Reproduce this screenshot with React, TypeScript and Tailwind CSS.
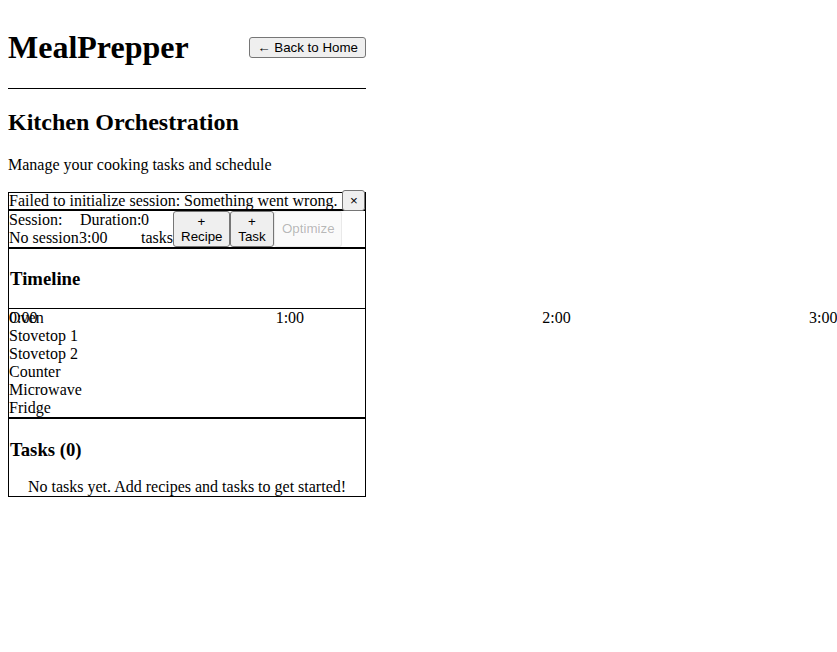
const btn =
  "rounded-[3px] border border-[#767676] bg-[#efefef] px-[7px] py-[2px] font-['Liberation_Sans',Arial,sans-serif] text-[13.33px] leading-[15px] text-black"

const resources = ['Oven', 'Stovetop 1', 'Stovetop 2', 'Counter', 'Microwave', 'Fridge']

export default function App() {
  return (
    <div className="min-h-screen w-full overflow-hidden bg-white p-2 font-['Liberation_Serif','Times_New_Roman',serif] text-base text-black">
      <div className="w-[358px]">
        <header className="flex items-center justify-between border-b border-black">
          <h1 className="my-[21.44px] text-[32px] leading-[37px] font-bold">MealPrepper</h1>
          <button className={`${btn} whitespace-nowrap`}>← Back to Home</button>
        </header>

        <h2 className="mt-[19px] mb-[20px] text-[24px] leading-[28px] font-bold">Kitchen Orchestration</h2>
        <p className="mb-[18px] leading-[18px]">Manage your cooking tasks and schedule</p>

        <div className="border border-black">
          {/* error banner */}
          <div className="flex h-[18px] items-center justify-between border-b-2 border-black leading-[18px]">
            <span>Failed to initialize session: Something went wrong.</span>
            <button className={`${btn} relative z-10 w-[23px] px-0 text-[11px]`}>×</button>
          </div>

          {/* session bar */}
          <div className="flex border-b-2 border-black leading-[18px]">
            <div className="flex w-[70px] shrink-0 flex-col">
              <span>Session:</span>
              <span>No session</span>
            </div>
            <div className="flex w-[62px] shrink-0 flex-col">
              <span className="pl-px">Duration:</span>
              <span>3:00</span>
            </div>
            <div className="flex w-[32px] shrink-0 flex-col">
              <span>0</span>
              <span>tasks</span>
            </div>
            <button className={`${btn} w-[57px] shrink-0`}>+ Recipe</button>
            <button className={`${btn} w-[44px] shrink-0`}>+ Task</button>
            <button
              disabled
              className="w-[68px] shrink-0 rounded-[3px] border border-[#76767622] bg-[#efefef4d] px-[7px] py-[2px] font-['Liberation_Sans',Arial,sans-serif] text-[13.33px] leading-[15px] text-[#1010104d]"
            >
              Optimize
            </button>
          </div>

          {/* timeline */}
          <div className="border-b border-black px-px pt-[19.5px] pb-[18px]">
            <h3 className="text-[18.72px] leading-[21.5px] font-bold">Timeline</h3>
          </div>
          <div className="relative border-b-2 border-black leading-[18px]">
            <div className="absolute top-0 left-0 h-[18px] w-[800px] whitespace-nowrap">
              <span className="absolute left-0">0:00</span>
              <span className="absolute left-[266.67px]">1:00</span>
              <span className="absolute left-[533.33px]">2:00</span>
              <span className="absolute left-[800px]">3:00</span>
            </div>
            {resources.map((r) => (
              <div key={r}>{r}</div>
            ))}
          </div>

          {/* tasks */}
          <div className="px-px pt-[20px]">
            <h3 className="text-[18.72px] leading-[21.5px] font-bold">Tasks (0)</h3>
          </div>
          <p className="mt-[18px] text-center leading-[18px]">
            No tasks yet. Add recipes and tasks to get started!
          </p>
        </div>
      </div>
    </div>
  )
}
